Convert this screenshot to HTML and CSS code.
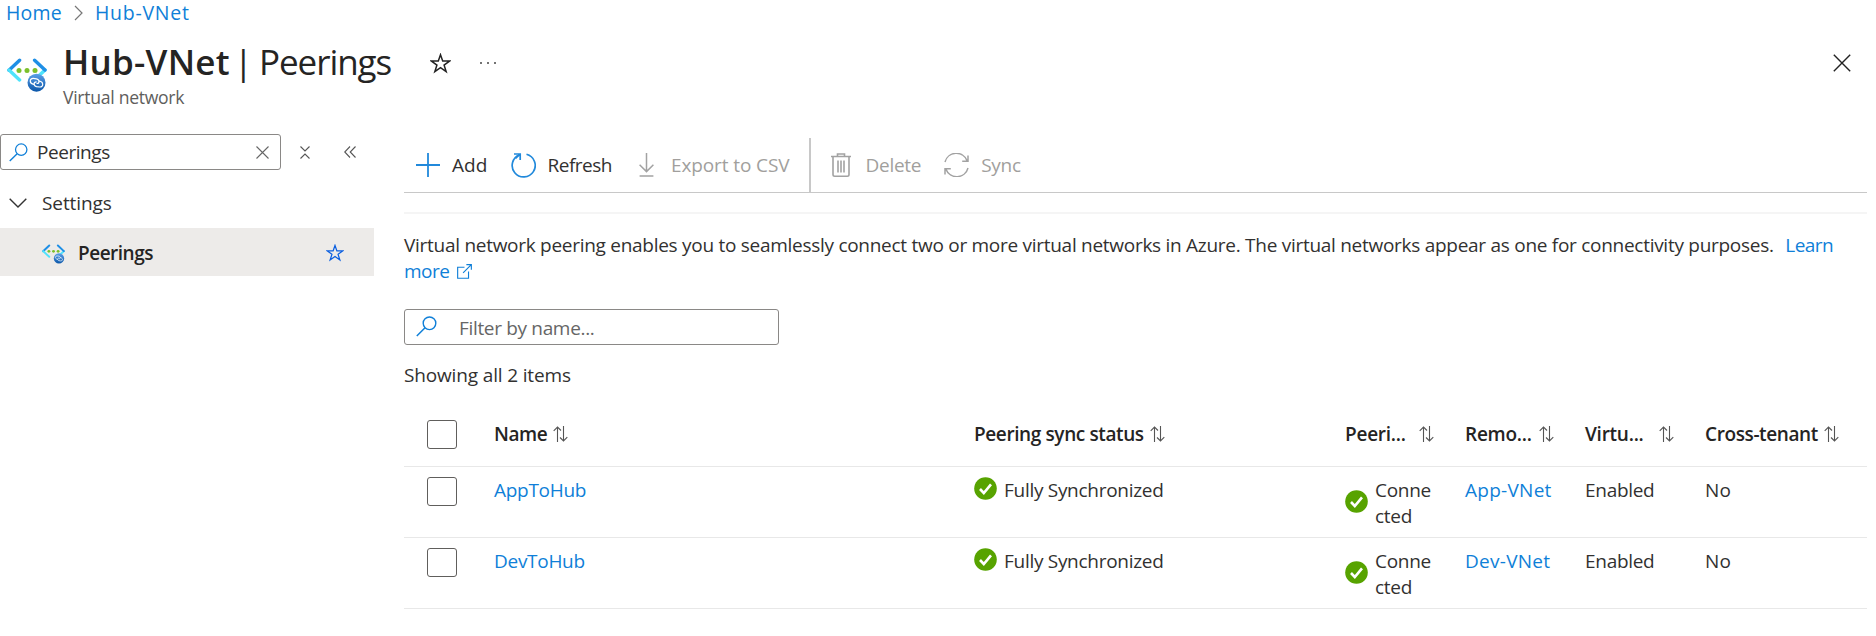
FILE: index.html
```html
<!DOCTYPE html>
<html lang="en">
<head>
<meta charset="utf-8">
<title>Hub-VNet | Peerings</title>
<link rel="stylesheet" href="styles.css">
</head>
<body>
<svg class="defs" width="0" height="0" aria-hidden="true">
  <defs>
    <linearGradient id="badge" x1="0" y1="0" x2="0" y2="1"><stop offset="0" stop-color="#5b9fe8"/><stop offset="1" stop-color="#0a56a8"/></linearGradient>
    <symbol id="peering" viewBox="0 0 40 34">
      <path d="M12.600 2.200 L2 12.300" stroke="#1f8fe6" stroke-width="3.400" fill="none" stroke-linecap="round"/>
      <path d="M2 12 L12.600 21.900" stroke="#4fe3fb" stroke-width="3.400" fill="none" stroke-linecap="round"/>
      <path d="M38 12 L30 19.600" stroke="#4fe3fb" stroke-width="3.400" fill="none" stroke-linecap="round"/>
      <path d="M27.600 2.200 L38 12" stroke="#1f8fe6" stroke-width="3.400" fill="none" stroke-linecap="round"/>
      <g fill="#7cc02b"><circle cx="12" cy="12.400" r="2.500"/><circle cx="20" cy="12.400" r="2.500"/><circle cx="28" cy="12.400" r="2.500"/></g>
      <circle cx="29.500" cy="24.700" r="9" fill="url(#badge)"/>
      <g fill="none" stroke="#fff" stroke-width="1.200" stroke-linecap="round"><path d="M26.800 26.300 C22.300 25.800 22 20.300 26.300 20.400 L29.500 20.800 C33 21.700 32.600 25.300 30 25.500"/><path d="M32.200 23.200 C36.800 23.800 36.800 29.300 32.600 29 L29.600 28.600 C26 27.600 26.600 24 29.200 23.900"/></g>
    </symbol>
    <symbol id="star" viewBox="0 0 20 20"><path d="M10 1.600 L12.100 7.700 H18.600 L13.400 11.500 L15.400 17.800 L10 14 L4.600 17.800 L6.600 11.500 L1.400 7.700 H7.900 Z" fill="none" stroke="currentColor" stroke-width="1.400"/></symbol>
    <symbol id="search" viewBox="0 0 21 21"><circle cx="13.500" cy="7.300" r="6.300" fill="none" stroke="currentColor" stroke-width="1.400"/><path d="M9 11.800 L.8 20" stroke="currentColor" stroke-width="1.500"/></symbol>
    <symbol id="sort" viewBox="0 0 15 16"><path d="M4.500 16 V1 M.7 4.800 L4.500 1 L8 4.500 M10.500 0 V15 M7 11.500 L10.500 15 L14.300 11.200" fill="none" stroke="#555" stroke-width="1.100"/></symbol>
    <symbol id="ok" viewBox="0 0 23 23"><circle cx="11.500" cy="11.500" r="11.300" fill="#57a300"/><path d="M6 12 L9.800 16 L17 7.300" fill="none" stroke="#fff" stroke-width="2.600"/></symbol>
  </defs>
</svg>

<nav class="breadcrumb">
  <a class="crumb-home">Home</a>
  <svg class="crumb-sep" width="9" height="16" viewBox="0 0 9 16"><path d="M1 1 L8 8 L1 15" fill="none" stroke="#777" stroke-width="1.200"/></svg>
  <a class="crumb-hub">Hub-VNet</a>
</nav>

<header class="blade-head">
  <svg class="head-icon" width="40" height="34"><use href="#peering"/></svg>
  <div class="head-text">
    <div class="title-row">
      <h1 class="title"><b class="title-name">Hub-VNet</b><span class="title-bar">|</span><span class="title-page">Peerings</span></h1>
      <svg class="head-star" width="21" height="21"><use href="#star"/></svg>
      <svg class="head-more" width="18" height="4" viewBox="0 0 18 4"><g fill="#444"><circle cx="2" cy="2" r="1"/><circle cx="9" cy="2" r="1"/><circle cx="16" cy="2" r="1"/></g></svg>
    </div>
    <div class="subtitle">Virtual network</div>
  </div>
  <svg class="close" width="18" height="18" viewBox="0 0 18 18"><path d="M.8 .8 L17.200 17.200 M17.200 .8 L.8 17.200" stroke="#222" stroke-width="1.400"/></svg>
</header>

<div class="body">
  <aside class="side">
    <div class="side-tools">
      <div class="side-search">
        <svg class="blue" width="19" height="19"><use href="#search"/></svg>
        <span class="side-query">Peerings</span>
        <svg class="clear" width="13" height="13" viewBox="0 0 13 13"><path d="M.5 .5 L12.500 12.500 M12.500 .5 L.5 12.500" stroke="#666" stroke-width="1.100"/></svg>
      </div>
      <svg class="collapse" width="10" height="13" viewBox="0 0 10 13"><path d="M.5 .5 L5 5 L9.500 .5 M.5 12.500 L5 8 L9.500 12.500" fill="none" stroke="#555" stroke-width="1.100"/></svg>
      <svg class="hide" width="12" height="12" viewBox="0 0 12 12"><path d="M6 .5 L.7 6 L6 11.500 M11.500 .5 L6.200 6 L11.500 11.500" fill="none" stroke="#555" stroke-width="1.100"/></svg>
    </div>
    <div class="group">
      <svg width="18" height="10" viewBox="0 0 18 10"><path d="M.7 .7 L9 9 L17.300 .7" fill="none" stroke="#333" stroke-width="1.400"/></svg>
      <span class="group-label">Settings</span>
    </div>
    <div class="item">
      <svg class="item-icon" width="23" height="20"><use href="#peering"/></svg>
      <span class="item-label">Peerings</span>
      <svg class="item-star" width="18" height="18"><use href="#star"/></svg>
    </div>
  </aside>

  <main class="main">
    <div class="toolbar">
      <svg class="ic-add" width="24" height="24" viewBox="0 0 24 24"><path d="M12 0 V24 M0 12 H24" stroke="#2189db" stroke-width="1.800"/></svg>
      <span class="l-add">Add</span>
      <svg class="ic-refresh" width="25" height="25" viewBox="0 0 25 25"><path d="M15.500 1.300 A11.500 11.500 0 1 1 8.600 1.700" fill="none" stroke="#2189db" stroke-width="1.700"/><path d="M3 1 H9.200 V7 M9 1.200 L4.500 5.500" fill="none" stroke="#2189db" stroke-width="1.700"/></svg>
      <span class="l-refresh">Refresh</span>
      <svg class="ic-export" width="15" height="24" viewBox="0 0 15 24"><path d="M7.500 0 V18.500 M.6 11.800 L7.500 18.600 L14.400 11.800 M.6 23 H14.400" fill="none" stroke="#a2a2a2" stroke-width="1.500"/></svg>
      <span class="l-export off">Export to CSV</span>
      <i class="divider"></i>
      <svg class="ic-trash" width="20" height="24" viewBox="0 0 20 24"><path d="M0 3.500 H20 M6.500 3 V1 H13.500 V3 M2 4 V21.500 Q2 23.200 3.700 23.200 H16.300 Q18 23.200 18 21.500 V4 M7 7.500 V19.500 M10 7.500 V19.500 M13 7.500 V19.500" fill="none" stroke="#a2a2a2" stroke-width="1.600"/></svg>
      <span class="l-delete off">Delete</span>
      <svg class="ic-sync" width="25" height="24" viewBox="0 0 25 24"><path d="M1 9 A11.600 11.600 0 0 1 23 7.600 M24 15 A11.600 11.600 0 0 1 2 16.400 M24 2.500 V8.300 H18.200 M1 21.500 V15.700 H6.800" fill="none" stroke="#a2a2a2" stroke-width="1.500"/></svg>
      <span class="l-sync off">Sync</span>
    </div>
    <p class="intro">Virtual network peering enables you to seamlessly connect two or more virtual networks in Azure. The virtual networks appear as one for connectivity purposes. <a class="learn">Learn more<svg class="ext" width="15" height="15" viewBox="0 0 16 16"><path d="M8 3.500 H.7 V15.200 H12.300 V8 M6.500 9.500 L15 1 M10 .7 H15.300 V6" fill="none" stroke="currentColor" stroke-width="1.200"/></svg></a></p>
    <div class="filter"><svg class="blue" width="21" height="21"><use href="#search"/></svg><span>Filter by name...</span></div>
    <div class="count">Showing all 2 items</div>

    <div class="grid">
      <div class="row head">
        <div class="cell check"><i class="box"></i></div>
        <div class="cell name"><span>Name</span><svg width="15" height="16"><use href="#sort"/></svg></div>
        <div class="cell"><span>Peering sync status</span><svg width="15" height="16"><use href="#sort"/></svg></div>
        <div class="cell fixed"><span>Peeri...</span><svg width="15" height="16"><use href="#sort"/></svg></div>
        <div class="cell fixed"><span>Remo...</span><svg width="15" height="16"><use href="#sort"/></svg></div>
        <div class="cell fixed"><span>Virtu...</span><svg width="15" height="16"><use href="#sort"/></svg></div>
        <div class="cell"><span>Cross-tenant</span><svg width="15" height="16"><use href="#sort"/></svg></div>
      </div>
      <div class="row">
        <div class="cell check"><i class="box"></i></div>
        <div class="cell name"><a>AppToHub</a></div>
        <div class="cell status"><svg width="23" height="23"><use href="#ok"/></svg><span>Fully Synchronized</span></div>
        <div class="cell state"><svg width="23" height="23"><use href="#ok"/></svg><span>Conne<br>cted</span></div>
        <div class="cell remote"><a>App-VNet</a></div>
        <div class="cell"><span>Enabled</span></div>
        <div class="cell remote"><span>No</span></div>
      </div>
      <div class="row">
        <div class="cell check"><i class="box"></i></div>
        <div class="cell name"><a>DevToHub</a></div>
        <div class="cell status"><svg width="23" height="23"><use href="#ok"/></svg><span>Fully Synchronized</span></div>
        <div class="cell state"><svg width="23" height="23"><use href="#ok"/></svg><span>Conne<br>cted</span></div>
        <div class="cell remote"><a>Dev-VNet</a></div>
        <div class="cell"><span>Enabled</span></div>
        <div class="cell remote"><span>No</span></div>
      </div>
    </div>
  </main>
</div>
</body>
</html>
```
FILE: styles.css
```css
* { box-sizing: border-box; }
body { margin: 0; background: #fff; color: #323130; font: 19px/26px "Open Sans", "Noto Sans", sans-serif; letter-spacing: -.29px; overflow: hidden; }
svg { display: block; flex: none; }
.defs { position: absolute; }
a { color: #0f7fd8; text-decoration: none; }
.blue { color: #0f7fd8; }

.breadcrumb { display: flex; align-items: center; height: 26px; padding-left: 6px; }
.crumb-home, .crumb-hub { font-size: 19.500px; line-height: 24px; }
.crumb-home { letter-spacing: .2px; }
.crumb-hub { letter-spacing: .75px; }
.crumb-sep { margin: 0 12px; }

.blade-head { display: flex; height: 83px; padding: 11px 0 0 7px; }
.head-icon { margin-top: 21px; }
.head-text { flex: 1; padding-left: 16px; }
.title-row { display: flex; align-items: center; height: 48px; }
.title { display: flex; margin: 0; padding-top: 2px; font-size: 35px; line-height: 48px; font-weight: 400; color: #252423; letter-spacing: 0; }
.title-name { font-weight: 600; letter-spacing: .25px; }
.title-bar { margin: 0 6px 0 4px; }
.title-page { letter-spacing: -1.080px; }
.head-star { margin: 4px 0 0 39px; color: #222; }
.head-more { margin-left: 28px; margin-top: 3px; }
.subtitle { font-size: 17.600px; line-height: 24px; color: #605e5c; }
.close { margin: 17px 25px 0 0; }

.body { display: grid; grid-template-columns: 374px 1463px; column-gap: 30px; }
.side { padding-top: 25px; }
.side-tools { display: flex; align-items: center; }
.side-search { display: flex; align-items: center; width: 281px; height: 36px; padding: 0 11px 0 8px; border: 1px solid #8a8886; border-radius: 3px; }
.side-query { flex: 1; padding-left: 9px; letter-spacing: -.450px; }
.collapse { margin-left: 19px; }
.hide { margin-left: 34px; }
.group { display: flex; align-items: center; gap: 15px; height: 58px; padding: 8px 0 0 9px; }
.group-label { letter-spacing: -.1px; }
.item { display: flex; align-items: center; height: 48px; padding: 0 30px 0 42px; background: #edebe9; }
.item-icon { margin-top: 3px; }
.item-label { flex: 1; padding: 2px 0 0 13px; font-weight: 600; color: #252423; letter-spacing: -.5px; }
.item-star { color: #0b5fe0; margin-top: 1px; }

.main { padding-top: 29px; }
.toolbar { display: flex; align-items: center; height: 55px; padding-left: 12px; border-bottom: 1px solid #c8c8c8; }
.l-add { margin-left: 12px; letter-spacing: .08px; }
.ic-refresh { margin-left: 23px; }
.l-refresh { margin-left: 12px; letter-spacing: -.5px; }
.ic-export { margin-left: 27px; }
.l-export { margin-left: 17px; letter-spacing: -.1px; }
.off { color: #a19f9d; }
.divider { align-self: stretch; width: 2px; margin: 0 20px 0 19px; background: #c8c8c8; }
.l-delete { margin-left: 15px; }
.ic-sync { margin-left: 23px; }
.l-sync { margin-left: 12px; }

.intro { margin: 19px 0 0; padding-top: 18px; border-top: 2px solid #f5f5f5; height: 72px; letter-spacing: -.278px; }
.learn { margin-left: 7px; letter-spacing: -.550px; }
.ext { display: inline-block; margin-left: 8px; vertical-align: -1px; }
.filter { display: flex; align-items: center; gap: 22px; width: 375px; height: 36px; margin-top: 25px; padding: 2px 0 0 11px; border: 1px solid #8a8886; border-radius: 3px; color: #666; letter-spacing: -.330px; }
.filter svg { margin-top: -3px; }
.count { margin-top: 17px; letter-spacing: -.150px; }

.row { display: grid; grid-template-columns: 91px 479px 371px 120px 120px 120px 162px; height: 71px; padding-top: 10px; border-bottom: 1px solid #e8e8e8; }
.cell { display: flex; align-items: flex-start; }
.head { height: 79px; padding-top: 33px; align-items: start; font-weight: 600; color: #252423; letter-spacing: -.39px; }
.head .cell { align-items: center; gap: 6px; height: 26px; }
.head .fixed { justify-content: space-between; padding-right: 31px; letter-spacing: -.250px; }
.check { padding-left: 23px; }
.name { margin-left: -1px; }
.box { width: 30px; height: 29px; border: 1px solid #605e5c; border-radius: 3px; }
.status { gap: 7px; }
.state { gap: 7px; }
.state svg { margin-top: 13px; }
.remote { letter-spacing: .270px; }
```
